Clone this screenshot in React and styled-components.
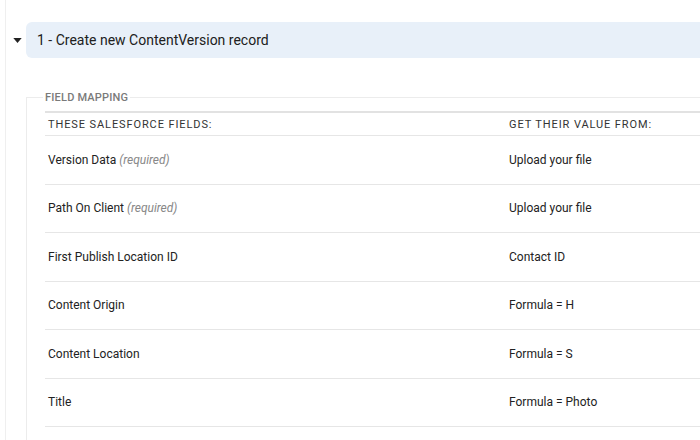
import React from "react";
import styled, { createGlobalStyle } from "styled-components";

const rows = [
  { field: "Version Data", required: true, value: "Upload your file" },
  { field: "Path On Client", required: true, value: "Upload your file" },
  { field: "First Publish Location ID", value: "Contact ID" },
  { field: "Content Origin", value: "Formula = H" },
  { field: "Content Location", value: "Formula = S" },
  { field: "Title", value: "Formula = Photo" },
];

function App() {
  return (
    <>
      <GlobalStyle />
      <Page>
        <StepRow>
          <Caret viewBox="0 0 10 6">
            <path d="M0 0 L10 0 L5 6 Z" fill="#222" />
          </Caret>
          <StepBar>1 - Create new ContentVersion record</StepBar>
        </StepRow>
        <Mapping>
          <Legend>FIELD MAPPING</Legend>
          <Table>
            <HeadRow>
              <HeadCell>THESE SALESFORCE FIELDS:</HeadCell>
              <HeadCell>GET THEIR VALUE FROM:</HeadCell>
            </HeadRow>
            {rows.map((r, i) => (
              <Row key={i}>
                <Cell>
                  {r.field}
                  {r.required && <Required> (required)</Required>}
                </Cell>
                <Cell>{r.value}</Cell>
              </Row>
            ))}
          </Table>
        </Mapping>
      </Page>
    </>
  );
}

const GlobalStyle = createGlobalStyle`
  html, body {
    margin: 0;
    background: #fff;
    overflow: hidden;
  }
  body {
    font-family: Roboto, "Liberation Sans", sans-serif;
    color: #222;
  }
`;
const Page = styled.div`
  margin-left: 5px;
  border-left: 1px solid #efefef;
  padding-top: 22px;
  width: 695px;
  height: 440px;
  box-sizing: border-box;
  overflow: hidden;
`;
const StepRow = styled.div`
  display: flex;
  align-items: center;
  height: 36px;
`;
const Caret = styled.svg`
  width: 9px;
  height: 5px;
  margin-left: 7px;
  margin-right: 4px;
`;
const StepBar = styled.div`
  flex: 1;
  height: 36px;
  display: flex;
  align-items: center;
  padding-left: 11px;
  background: #e8f0f9;
  border-radius: 6px 0 0 6px;
  font-size: 14px;
  color: #202020;
`;
const Mapping = styled.fieldset`
  margin: 33px 0 0 20px;
  padding: 0 0 40px 18px;
  border: 1px solid #ececec;
  border-right: none;
  min-width: 0;
`;
const Legend = styled.legend`
  padding: 0 2px;
  margin-left: -2px;
  font-size: 11px;
  font-weight: 500;
  color: #7a7a7a;
  letter-spacing: 0.2px;
`;
const Table = styled.div`
  display: flex;
  flex-direction: column;
  margin-top: 7px;
  border-top: 2px solid #e2e2e2;
`;
const HeadRow = styled.div`
  display: grid;
  grid-template-columns: 461px 1fr;
  height: 22px;
  align-items: center;
  border-bottom: 1px solid #e6e6e6;
`;
const HeadCell = styled.div`
  padding-left: 3px;
  font-size: 11px;
  letter-spacing: 0.9px;
  color: #333;
`;
const Row = styled.div`
  display: grid;
  grid-template-columns: 461px 1fr;
  height: 47.5px;
  align-items: center;
  border-bottom: 1px solid #e6e6e6;
`;
const Cell = styled.div`
  padding-left: 3px;
  font-size: 12px;
  color: #222;
`;
const Required = styled.span`
  font-style: italic;
  color: #888;
`;

export default App;
